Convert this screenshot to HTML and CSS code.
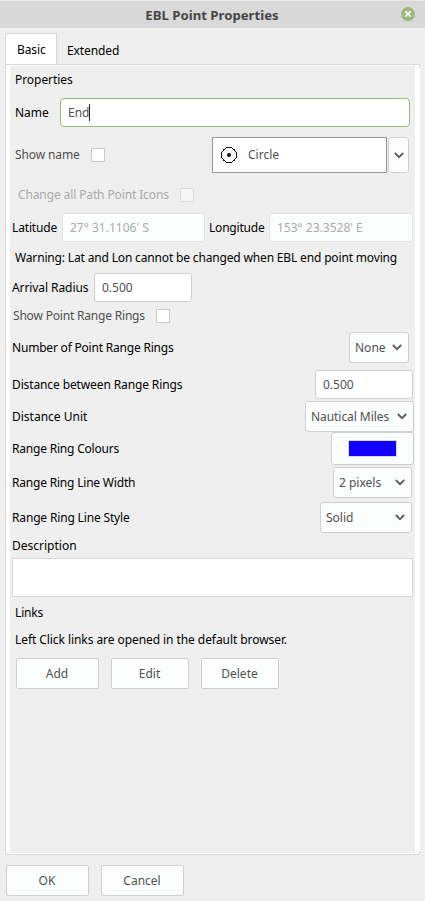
FILE: index.html
```html
<!DOCTYPE html>
<html lang="en">
<head>
<meta charset="utf-8">
<title>EBL Point Properties</title>
<link rel="stylesheet" href="styles.css">
</head>
<body>
<svg class="defs" width="0" height="0"><symbol id="chev" viewBox="0 0 10 7"><path d="M.8 1 5 5.2 9.2 1" fill="none" stroke="#5c5c5c" stroke-width="1.8"/></symbol></svg>
<header class="titlebar"><h1>EBL Point Properties</h1>
<svg class="close" viewBox="0 0 14 14"><circle cx="7" cy="7" r="7" fill="#9ab87c"/><path d="M4.4 4.4 9.6 9.6M9.6 4.4 4.4 9.6" stroke="#fff" stroke-width="1.9"/></svg></header>
<nav class="tabs"><div class="tab active">Basic</div><div class="tab">Extended</div></nav>
<main class="page"><div class="content">
<div class="row heading indent">Properties</div>
<div class="row name indent"><span class="label">Name</span><div class="field focus">End<i class="caret"></i></div></div>
<div class="row icon indent soft"><span class="label">Show name</span><i class="check"></i>
<div class="combo"><svg width="18" height="18" viewBox="0 0 18 18"><circle cx="9" cy="9" r="7.5" fill="none" stroke="#111" stroke-width="1" shape-rendering="crispEdges"/><circle cx="9" cy="9" r="2" fill="#111"/></svg><span>Circle</span></div><div class="drop"><svg class="chev"><use href="#chev"/></svg></div></div>
<div class="row change dim"><span class="label">Change all Path Point Icons</span><i class="check"></i></div>
<div class="row latlon"><span class="label lat">Latitude</span><div class="field off">27° 31.1106' S</div><span class="label lon">Longitude</span><div class="field off last">153° 23.3528' E</div></div>
<div class="row warning indent">Warning: Lat and Lon cannot be changed when EBL end point moving</div>
<div class="row arrival"><span class="label">Arrival Radius</span><div class="field short">0.500</div></div>
<div class="row rings soft"><span class="label">Show Point Range Rings</span><i class="check"></i></div>
<div class="row number split"><span>Number of Point Range Rings</span><div class="select">None<svg class="chev"><use href="#chev"/></svg></div></div>
<div class="row distance split"><span>Distance between Range Rings</span><div class="field short">0.500</div></div>
<div class="row unit split"><span>Distance Unit</span><div class="select">Nautical Miles<svg class="chev"><use href="#chev"/></svg></div></div>
<div class="row colour split"><span>Range Ring Colours</span><div class="select"><i class="swatch"></i></div></div>
<div class="row width split"><span>Range Ring Line Width</span><div class="select">2 pixels<svg class="chev"><use href="#chev"/></svg></div></div>
<div class="row style split"><span>Range Ring Line Style</span><div class="select">Solid<svg class="chev"><use href="#chev"/></svg></div></div>
<div class="row description">Description</div>
<div class="textarea"></div>
<div class="row links indent">Links</div>
<div class="row hint indent">Left Click links are opened in the default browser.</div>
<div class="buttons"><div class="btn">Add</div><div class="btn small">Edit</div><div class="btn small">Delete</div></div>
</div></main>
<footer class="buttons footer"><div class="btn">OK</div><div class="btn">Cancel</div></footer>
</body>
</html>
```
FILE: styles.css
```css
* { box-sizing: border-box; }
body { margin: 0; width: 425px; height: 901px; overflow: hidden; background: #efefef; color: #000; font: 12px/17px "Noto Sans", sans-serif; white-space: nowrap; }
.defs { display: block; }
.titlebar { height: 28px; display: flex; align-items: center; justify-content: center; background: #d9d9d9; border-top: 1px solid #e8e8e8; position: relative; }
h1 { margin: 1px 1px 0 0; font-size: 13.2px; line-height: 20px; font-weight: 700; color: #454545; }
.close { position: absolute; left: 401px; top: 6px; width: 14px; height: 14px; }
.tabs { height: 37px; padding: 5px 0 0 5px; display: flex; position: relative; margin-bottom: -1px; }
.tab { height: 32px; padding: 9px 10px 0; letter-spacing: -.1px; }
.tab.active { width: 52px; padding: 7px 0 0 11px; background: #fff; border: 1px solid #d9d9d9; border-bottom: 0; }
.page { margin-left: 5px; width: 415px; height: 791px; background: #fff; border: 1px solid #d9d9d9; border-right: 0; padding: 1px 5px 1px 4px; position: relative; }
.page::before, .page::after { content: ""; position: absolute; right: 0; width: 1px; height: 3px; background: #d9d9d9; }
.page::before { top: 0; }
.page::after { bottom: 0; }
.content { height: 787px; background: #efefef; padding-left: 2px; }
.row { display: flex; align-items: center; }
.indent { padding-left: 3px; }
.label { flex: none; }
.soft { color: #505050; }
.dim { color: #aaa; }
.heading { height: 27px; letter-spacing: -.06px; }
.name { height: 29px; margin-top: 5px; }
.name .label { width: 45px; }
.field { height: 29px; padding: 0 7px; display: flex; align-items: center; background: #fff; border: 1px solid #cfcfcf; border-radius: 3px; color: #505050; }
.focus { width: 350px; border-color: #9ab87c; border-radius: 4px; }
.caret { width: 1px; height: 17px; background: #222; }
.icon { height: 36px; margin-top: 10px; }
.icon .label { width: 76px; letter-spacing: -.12px; margin-bottom: 1px; }
.check { width: 14px; height: 14px; background: #fff; border: 1px solid #c8c8c8; border-radius: 1px; }
.combo { width: 175px; height: 36px; margin-left: 107px; padding-left: 7px; display: flex; align-items: center; gap: 10px; background: #fff; border: 1px solid #959595; }
.combo span { margin-bottom: 2px; }
.drop { width: 21px; height: 36px; margin-left: 1px; display: flex; align-items: center; justify-content: center; background: #fcfefd; border: 1px solid #cfcfcf; border-radius: 3px; }
.chev { width: 10px; height: 7px; flex: none; }
.change { height: 27px; margin-top: 8px; padding-left: 6px; letter-spacing: -.12px; }
.change .label { width: 162px; }
.change .check { background: #f6f6f6; border-color: #dcdcdc; }
.latlon { height: 29px; margin-top: 5px; }
.lat { width: 50px; letter-spacing: -.15px; }
.lon { width: 60px; margin-left: 4px; letter-spacing: -.2px; }
.off { width: 143px; background: #fcfefd; border-color: #e2e5e4; color: #aaa; }
.off.last { width: 144px; }
.warning { height: 27px; margin-top: 2px; letter-spacing: -.16px; }
.arrival { height: 29px; margin-top: 2px; }
.arrival .label { width: 82px; letter-spacing: -.08px; }
.short { width: 98px; }
.rings { height: 27px; padding-left: 1px; letter-spacing: -.19px; }
.rings .label { width: 143px; }
.split { justify-content: space-between; padding-right: 1px; }
.select { height: 31px; padding: 0 6px 0 5px; display: flex; align-items: center; justify-content: space-between; background: #fcfefd; border: 1px solid #cfcfcf; border-radius: 3px; color: #505050; }
.number { height: 31px; margin-top: 3px; padding-right: 6px; }
.number > span { letter-spacing: -.2px; }
.number .select { width: 60px; }
.distance { height: 29px; margin-top: 7px; padding-right: 2px; }
.distance > span { letter-spacing: -.12px; }
.unit { height: 31px; margin-top: 2px; }
.unit .select { width: 109px; letter-spacing: -.06px; }
.colour { height: 33px; }
.colour > span { letter-spacing: -.2px; }
.colour .select { width: 83px; height: 33px; padding: 0; justify-content: center; }
.swatch { width: 49px; height: 17px; background: #1400ff; border: 1px solid #d9d9d9; }
.width { height: 31px; margin-top: 2px; padding-right: 3px; }
.width > span { letter-spacing: -.2px; }
.width .select { width: 79px; }
.style { height: 31px; margin-top: 4px; padding-right: 3px; }
.style > span { letter-spacing: -.16px; }
.style .select { width: 92px; }
.description { height: 25px; }
.textarea { width: 401px; height: 39px; background: #fff; border: 1px solid #d9d9d9; }
.links { height: 30px; letter-spacing: -.15px; }
.hint { height: 25px; letter-spacing: -.07px; }
.buttons { display: flex; gap: 12px; margin: 6px 0 0 4px; }
.btn { width: 83px; height: 31px; display: flex; align-items: center; justify-content: center; background: #fcfefd; border: 1px solid #cfcfcf; border-radius: 2px; color: #505050; padding-right: 1px; }
.small { width: 78px; }
.footer { margin: 10px 0 0 6px; }
```
